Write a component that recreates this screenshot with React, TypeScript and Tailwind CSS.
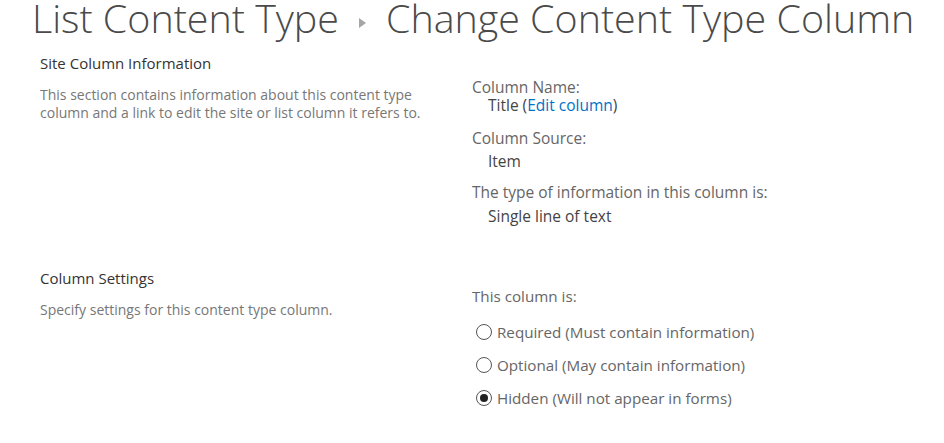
import React from 'react';

function Radio({ checked }: { checked?: boolean }) {
  return (
    <span className="w-[16px] h-[16px] rounded-full border border-[#555] flex items-center justify-center shrink-0">
      {checked && <span className="w-[8px] h-[8px] rounded-full bg-[#222]" />}
    </span>
  );
}

export default function App() {
  const options = [
    { label: 'Required (Must contain information)', checked: false },
    { label: 'Optional (May contain information)', checked: false },
    { label: 'Hidden (Will not appear in forms)', checked: true },
  ];

  return (
    <div className="w-[944px] h-[443px] bg-white overflow-hidden font-['Open_Sans',sans-serif]">
      <div className="h-[48px] pl-[32px] pt-[1px]">
        <h1 className="text-[39.4px] leading-[34px] font-light text-[#4a4a4a] whitespace-nowrap flex items-start">
          <span>List Content Type</span>
          <svg className="mt-[17px] mx-[20px] shrink-0" width="7" height="10" viewBox="0 0 7 10">
            <path d="M0 0 L7 5 L0 10 Z" fill="#a6a6a6" />
          </svg>
          <span>Change Content Type Column</span>
        </h1>
      </div>

      {/* Site Column Information */}
      <div className="grid grid-cols-[432px_1fr] pl-[40px]">
        <div className="pt-[6px]">
          <h3 className="text-[15px] leading-[18px] text-[#333]">Site Column Information</h3>
          <p className="mt-[14px] text-[14px] leading-[18px] text-[#777] w-[400px]">
            This section contains information about this content type column and a link to edit the site or list column it refers to.
          </p>
        </div>
        <div className="pt-[30px] text-[15.5px] leading-[18px]">
          <div className="text-[#666]">Column Name:</div>
          <div className="pl-[16px] text-[#444]">
            Title (<a className="text-[#0072c6]">Edit column</a>)
          </div>
          <div className="mt-[15px] text-[#666]">Column Source:</div>
          <div className="pl-[16px] mt-[5px] text-[#444]">Item</div>
          <div className="mt-[13px] text-[#666]">The type of information in this column is:</div>
          <div className="pl-[16px] mt-[6px] text-[#444]">Single line of text</div>
        </div>
      </div>

      {/* Column Settings */}
      <div className="grid grid-cols-[432px_1fr] pl-[40px] mt-[44px]">
        <div>
          <h3 className="text-[15px] leading-[18px] text-[#333]">Column Settings</h3>
          <p className="mt-[14px] text-[14px] leading-[18px] text-[#777]">
            Specify settings for this content type column.
          </p>
        </div>
        <div className="pt-[18px] text-[15.2px] leading-[18px]">
          <div className="text-[#666]">This column is:</div>
          <div className="mt-[18px] flex flex-col gap-[15px]">
            {options.map((o) => (
              <label key={o.label} className="flex items-center gap-[5px] pl-[4px] text-[#666]">
                <Radio checked={o.checked} />
                <span>{o.label}</span>
              </label>
            ))}
          </div>
        </div>
      </div>
    </div>
  );
}
